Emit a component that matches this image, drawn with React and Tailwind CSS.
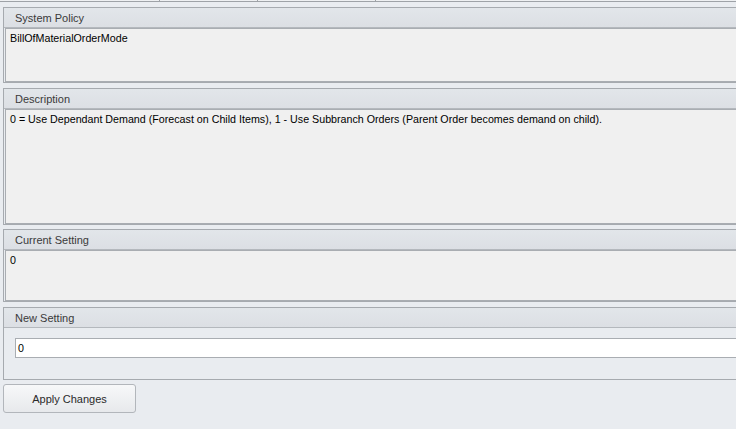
const Panel = ({ title, bodyHeight, children }) => {
    return (
        <div className="w-[760px] ml-[3px] border border-[#a6aaaf] bg-[#e9ecf0]">
            <div className="h-[20px] border-b border-[#b4b8bd] bg-gradient-to-b from-[#e2e6ea] to-[#dcdfe4] pl-[11px] flex items-center text-[#3a3a3a]">
                {title}
            </div>
            <div className={`ml-[1px] border border-[#a9adb2] bg-[#f0f0f0] px-[4px] pt-[2px] text-black text-[10.7px] ${bodyHeight}`}>
                {children}
            </div>
        </div>
    );
};

export default function App() {
    return (
        <div
            className="w-[736px] h-[429px] overflow-hidden bg-[#e9ecf0] text-[11px] leading-[14px]"
            style={{ fontFamily: '"Liberation Sans", Arial, sans-serif' }}
        >
            {/* tab strip remnant */}
            <div className="flex h-[2px] border-b border-[#9ea2a7] bg-[#eef0f2]">
                <div className="w-[160px] border-r border-[#9ea2a7]" />
                <div className="w-[98px] border-r border-[#9ea2a7]" />
                <div className="w-[118px] border-r border-[#9ea2a7]" />
            </div>

            <div className="flex flex-col pt-[5px]">
                <Panel title="System Policy" bodyHeight="h-[54px]">
                    BillOfMaterialOrderMode
                </Panel>

                <div className="mt-[5px]">
                    <Panel title="Description" bodyHeight="h-[115px]">
                        0 = Use Dependant Demand (Forecast on Child Items), 1 - Use Subbranch Orders (Parent Order becomes demand on child).
                    </Panel>
                </div>

                <div className="mt-[4px]">
                    <Panel title="Current Setting" bodyHeight="h-[51px]">
                        0
                    </Panel>
                </div>

                <div className="mt-[5px] w-[760px] ml-[3px] border border-[#a6aaaf] bg-[#e9ecf0]">
                    <div className="h-[20px] border-b border-[#b4b8bd] bg-gradient-to-b from-[#e2e6ea] to-[#dcdfe4] pl-[11px] flex items-center text-[#3a3a3a]">
                        New Setting
                    </div>
                    <div className="h-[51px] pt-[10px] pl-[11px]">
                        <div className="h-[20px] border border-[#a9adb2] bg-white flex items-center pl-[2px] text-black text-[10.7px]">
                            0
                        </div>
                    </div>
                </div>

                <div className="mt-[4px] ml-[3px]">
                    <button className="w-[133px] h-[29px] rounded-[3px] border border-[#b2b6bb] bg-gradient-to-b from-[#f7f8f9] to-[#e7e9ec] text-[#2a2a2a] text-[11px]">
                        Apply Changes
                    </button>
                </div>
            </div>
        </div>
    );
}
